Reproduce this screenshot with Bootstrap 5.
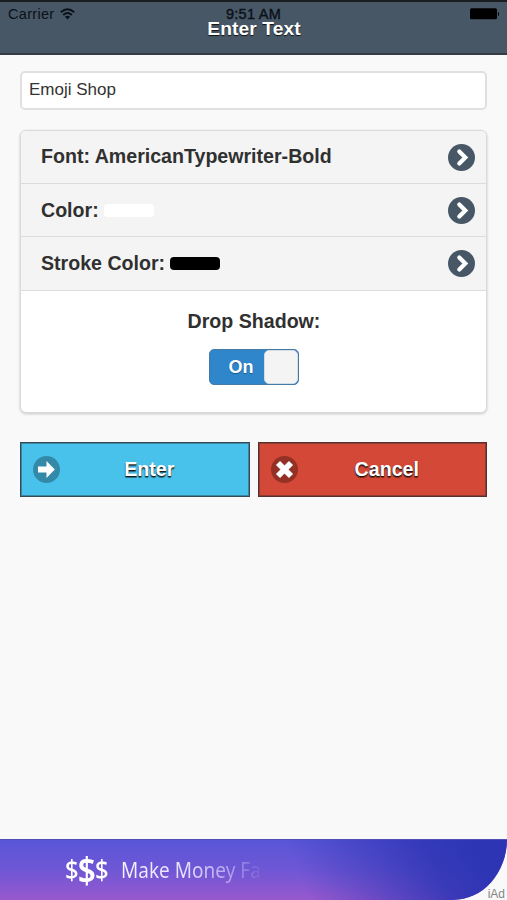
<!DOCTYPE html>
<html lang="en">
<head>
<meta charset="utf-8">
<meta name="viewport" content="width=device-width, initial-scale=1">
<title>Enter Text</title>
<link href="https://cdn.jsdelivr.net/npm/bootstrap@5.3.0/dist/css/bootstrap.min.css" rel="stylesheet">
<style>
body{font-family:"Liberation Sans",Arial,sans-serif;background:#f9f9f9;color:#303030;height:900px;overflow:hidden}
.app-head{height:55px;background:#475766;border-top:2px solid #1b1e20;border-bottom:2px solid #343b42}
.status{height:24px;padding:0 8px;color:#0b1118;font-size:14.5px;line-height:24px}
.carrier{letter-spacing:.3px}
.wifi{margin-left:6px}
.status .clock{letter-spacing:.25px;-webkit-text-stroke:.4px #0b1118;position:absolute;left:0;right:0;text-align:center}
.page-title{font-size:19.2px;font-weight:700;line-height:22px;margin-top:-8px;color:#fff;text-shadow:0 1px 1px #111;position:relative;letter-spacing:.1px;left:.5px}
.content{padding:16px 20px 0;flex:1}
.text-entry{height:39px;border:2px solid #e0e0e0;border-radius:5px;font-size:17px;padding:0 7px 1px;color:#333;background:#fff;width:467px}
.text-entry:focus{box-shadow:none}
.options{margin-top:20px;height:283px;border:1px solid #dadada;border-radius:6px;box-shadow:0 1px 3px rgba(0,0,0,.2);background:#fff;overflow:hidden;--bs-list-group-border-radius:5px}
.option{height:53.2px;background:#f4f4f4;color:#303030;font-size:19.6px;font-weight:700;padding:0 11px 0 20px;border:0;border-bottom:1px solid #dcdcdc}
.option svg{flex:none}
.swatch{width:50px;height:13px;border-radius:4px;margin-left:5px;display:inline-block}
.shadow-label{font-size:19.6px;font-weight:700;line-height:24px;margin-top:18px;padding-left:1px}
.toggle{width:90px;height:36px;border:1px solid #4779a5;border-radius:5px;background:#3086cb;margin-top:16px;color:#fff;font-size:18px;font-weight:700;text-shadow:0 1px 1px #175a8e}
.toggle .caption{padding:2px 0 0 9px}
.knob{width:34px;height:34px;background:#f4f4f4;border-radius:5px;border:1px solid #d5dde4}
.actions{margin-top:29px;gap:8px}
.action{height:55px;border:1px solid #344b57;box-shadow:inset 0 0 0 1px rgba(40,45,50,.4);border-radius:0;color:#fff!important;font-size:19.6px;font-weight:700;text-shadow:0 1px 1px #111,0 2px 1px rgba(0,0,0,.4);padding:0 12px}
.action span{flex:1;padding:1px 0 0 2px}
.enter,.enter:hover{background:#49c2eb;border-color:#344b57}
.cancel,.cancel:hover{background:#d34836;border-color:#59302b}
.banner{height:61px;position:relative;background:#f9f9f9}
.banner-art{height:61px;border-top:1px solid #514fb5;border-bottom-right-radius:54px 61px;padding-left:65px;background:linear-gradient(65deg,rgba(45,53,180,0) 58%,rgba(45,53,180,.85) 84%,#2d35b4 94%),linear-gradient(#5956d8,#6f57d5 50%,#9858ce);color:#fff}
.money{font-family:"Noto Sans",sans-serif;font-weight:500;font-size:27px;line-height:60px;width:63px;transform:scaleX(.88);transform-origin:left;margin-right:-7px}
.money b{font-size:36px;font-weight:600;margin:0 -1px}
.slogan{font-family:"Noto Sans",sans-serif;font-weight:400;font-size:21.5px;transform:scaleX(.885);transform-origin:left;white-space:nowrap;background:linear-gradient(90deg,#f4f0ff 0,#e8e2ff 45%,rgba(220,210,255,.6) 78%,rgba(220,210,255,.08) 100%);-webkit-background-clip:text;color:transparent}
.ad-mark{position:absolute;right:2px;bottom:-1px;font-size:12px;line-height:14px;color:#858585}
</style>
<script src="https://cdn.jsdelivr.net/npm/bootstrap@5.3.0/dist/js/bootstrap.bundle.min.js"></script>
</head>
<body class="d-flex flex-column">
<header class="app-head">
  <div class="status d-flex align-items-center justify-content-between position-relative">
    <div class="d-flex align-items-center"><span class="carrier">Carrier</span>
      <svg class="wifi" width="15" height="12" viewBox="0 0 15 12" fill="none" stroke="#0b1118" stroke-width="1.900"><path d="M.8 4.300Q7.500-1.600 14.200 4.300M3.200 7Q7.500 3.200 11.800 7"/><path d="M7.500 11.500L4.900 8.700Q7.500 6.700 10.100 8.700Z" fill="#0b1118" stroke="none"/></svg>
    </div>
    <span class="clock">9:51 AM</span>
    <svg width="29" height="12" viewBox="0 0 29 12"><rect y=".3" width="27" height="11" rx="1.500"/><path d="M28 4q1.200 0 1.200 2t-1.200 2z"/></svg>
  </div>
  <h1 class="page-title mb-0 text-center">Enter Text</h1>
</header>
<main class="content">
  <input class="text-entry form-control" type="text" value="Emoji Shop" aria-label="Text">
  <div class="options list-group">
    <a class="option list-group-item d-flex align-items-center"><span class="me-auto">Font: AmericanTypewriter-Bold</span>
      <svg width="27" height="27" viewBox="0 0 27 27"><circle cx="13.500" cy="13.500" r="13.500" fill="#475766"/><path d="M11.300 7.500l6 6-6 6" fill="none" stroke="#fff" stroke-width="4.200" stroke-linecap="round"/></svg></a>
    <a class="option list-group-item d-flex align-items-center"><span>Color:</span><i class="swatch bg-white me-auto"></i>
      <svg width="27" height="27" viewBox="0 0 27 27"><circle cx="13.500" cy="13.500" r="13.500" fill="#475766"/><path d="M11.300 7.500l6 6-6 6" fill="none" stroke="#fff" stroke-width="4.200" stroke-linecap="round"/></svg></a>
    <a class="option list-group-item d-flex align-items-center"><span>Stroke Color:</span><i class="swatch bg-black me-auto"></i>
      <svg width="27" height="27" viewBox="0 0 27 27"><circle cx="13.500" cy="13.500" r="13.500" fill="#475766"/><path d="M11.300 7.500l6 6-6 6" fill="none" stroke="#fff" stroke-width="4.200" stroke-linecap="round"/></svg></a>
    <div class="d-flex flex-column align-items-center">
      <div class="shadow-label">Drop Shadow:</div>
      <div class="toggle d-flex align-items-center" role="switch" aria-checked="true"><span class="caption flex-fill text-center">On</span><span class="knob"></span></div>
    </div>
  </div>
  <div class="actions d-flex">
    <button class="action enter btn d-flex align-items-center flex-fill w-50"><svg width="27" height="27" viewBox="0 0 27 27"><circle cx="13.500" cy="13.500" r="13.500" fill="#3489a8"/><path d="M5 10.400h8.500V5l8.300 8.500-8.300 8.500v-5.400H5z" fill="#fff"/></svg><span>Enter</span></button>
    <button class="action cancel btn d-flex align-items-center flex-fill w-50"><svg width="27" height="27" viewBox="0 0 27 27"><circle cx="13.500" cy="13.500" r="13.500" fill="#943124"/><path d="M7 7l13 13m0-13l-13 13" stroke="#fff" stroke-width="5.800"/></svg><span>Cancel</span></button>
  </div>
</main>
<footer class="banner">
  <div class="banner-art d-flex align-items-center"><span class="money d-flex align-items-center"><span>$</span><b>$</b><span>$</span></span><span class="slogan">Make Money Fa</span></div>
  <span class="ad-mark">iAd</span>
</footer>
</body>
</html>
